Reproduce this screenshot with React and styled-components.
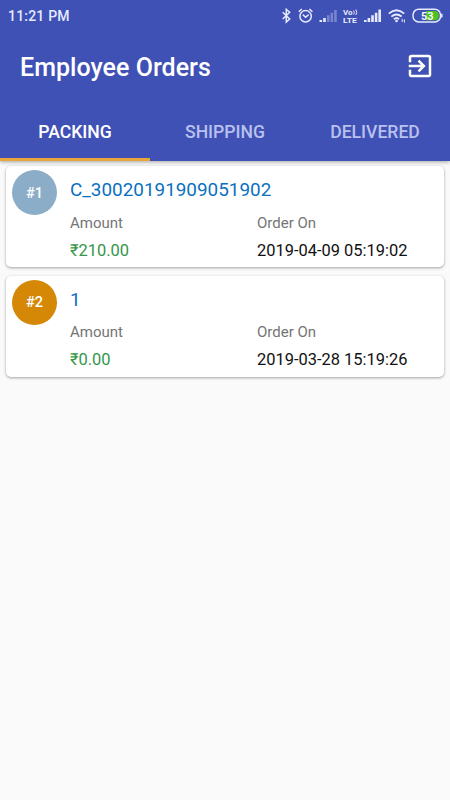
import React, { useState } from 'react';
import styled, { createGlobalStyle } from 'styled-components';

const GlobalStyle = createGlobalStyle`
  * {
    box-sizing: border-box;
  }

  body {
    margin: 0;
    background-color: #fafafa;
    font-family: Roboto, 'Noto Sans', sans-serif;
  }
`;

const Screen = styled.div`
  width: 450px;
  height: 800px;
  overflow: hidden;
  background-color: #fafafa;
`;

const Header = styled.header`
  position: relative;
  height: 161px;
  background-color: #3f51b5;
  box-shadow: 0 1px 4px rgba(0, 0, 0, 0.35);
`;

const StatusBar = styled.div`
  display: flex;
  justify-content: space-between;
  align-items: center;
  height: 32px;
  padding: 0 6px 0 8px;
  color: #e6eaff;
`;

const Clock = styled.span`
  font-size: 14px;
  font-weight: 500;
  letter-spacing: 0.2px;
`;

const StatusIcons = styled.svg`
  display: block;
  width: 164px;
  height: 32px;
`;

const Toolbar = styled.div`
  display: flex;
  justify-content: space-between;
  align-items: center;
  height: 70px;
  padding: 0 15px 0 20px;
`;

const Title = styled.h1`
  margin: 2px 0 0;
  font-size: 25px;
  line-height: 30px;
  font-weight: 500;
  letter-spacing: 0.03px;
  color: #fff;
`;

const LogoutButton = styled.button`
  display: flex;
  margin-bottom: 2px;
  padding: 0;
  border: none;
  background: none;
  color: #fff;
  cursor: pointer;
`;

const Tabs = styled.nav`
  display: grid;
  grid-template-columns: repeat(3, 1fr);
  height: 59px;
`;

const Tab = styled.button`
  padding: 4px 0 0;
  border: none;
  border-bottom: 3px solid ${({ $active }) => ($active ? '#e9a63a' : 'transparent')};
  background: none;
  font-family: inherit;
  font-size: 17.6px;
  font-weight: 500;
  color: ${({ $active }) => ($active ? '#fff' : '#b9c1ee')};
  cursor: pointer;
`;

const OrderList = styled.main`
  display: flex;
  flex-direction: column;
  gap: 8.5px;
  padding: 5px 6px;
`;

const Card = styled.article`
  display: flex;
  height: 101px;
  padding: 4px 6px;
  border-radius: 5px;
  background-color: #fff;
  box-shadow: 0 1px 3px rgba(0, 0, 0, 0.36);
`;

const Badge = styled.div`
  display: flex;
  flex-shrink: 0;
  justify-content: center;
  align-items: center;
  width: 45px;
  height: 45px;
  padding-top: 1px;
  border-radius: 50%;
  background-color: ${({ $color }) => $color};
  font-size: 14.5px;
  font-weight: 500;
  color: #fff;
`;

const Details = styled.div`
  flex: 1;
  padding: 8px 0 0 13px;
`;

const OrderCode = styled.div`
  font-size: 18.9px;
  line-height: 24px;
  color: #0b70bf;
`;

const Fields = styled.div`
  display: grid;
  grid-template-columns: 187px 1fr;
  margin-top: 10.7px;
`;

const Label = styled.div`
  font-size: 15px;
  line-height: 20px;
  color: #757575;
`;

const Value = styled.div`
  margin-top: 8px;
  font-size: 16.45px;
  line-height: 20px;
  color: ${({ $color }) => $color || '#111'};
`;

const tabs = ['PACKING', 'SHIPPING', 'DELIVERED'];

const orders = [
  { code: 'C_30020191909051902', amount: '₹210.00', date: '2019-04-09 05:19:02', color: '#8badc7' },
  { code: '1', amount: '₹0.00', date: '2019-03-28 15:19:26', color: '#d48806' },
];

const SystemIcons = () => (
  <StatusIcons viewBox="280 0 164 32" fill="none" stroke="#e6eaff" strokeWidth="1.5">
    {/* bluetooth */}
    <path d="M282.7 12.3l7 6.7-3.4 3V9.3l3.4 3-7 6.7" />
    {/* alarm */}
    <circle cx="305.6" cy="16.2" r="5.7" />
    <path d="M302.8 14.6l2.8 2.6 3-2.6M298.8 11.8l3-2.8M312.4 11.8l-3-2.8" />
    <g fill="#e6eaff" stroke="none">
      {/* first sim */}
      <path d="M319.5 20h2.6v2h-2.6zM323.2 18h2.6v4h-2.6z" />
      <path opacity="0.35" d="M327 15.3h2.5V22H327zM330.6 12.8h2.5V22h-2.5zM334.2 10h2.5v12h-2.5z" />
      <text x="343" y="15" fontSize="7" fontWeight="700" textLength="9.5" lengthAdjust="spacingAndGlyphs">Vo</text>
      <text x="343" y="22.5" fontSize="7.4" fontWeight="700" textLength="14" lengthAdjust="spacingAndGlyphs">LTE</text>
      {/* second sim */}
      <path d="M364 20h2.6v2H364zM367.6 18h2.6v4h-2.6zM371.2 15.3h2.6V22h-2.6zM374.8 12.8h2.6V22h-2.6zM378.4 9.5h2.6V22h-2.6z" />
    </g>
    <path d="M353.6 10.5q1.5 2 0 4M355.8 9.5q2 3 0 5.5" strokeWidth="1" />
    {/* wifi */}
    <path d="M388.8 13.6q7.7-6.6 15.4 0M391.4 16.6q5-4.4 10.2 0M394 19.3q2.5-2.4 5 0" strokeWidth="1.9" />
    <circle cx="396.5" cy="21" r="1.3" fill="#e6eaff" stroke="none" />
    <path d="M402.2 18.8v3.2M404.4 19.4v3.2" strokeWidth="1" />
    {/* battery */}
    <rect x="413" y="9.2" width="27.5" height="12.8" rx="5.8" />
    <path d="M426 10.9h8.5q4.4 0 4.4 4.7t-4.4 4.7h-8.5z" fill="#4fc21f" stroke="none" />
    <path d="M441.8 13.8v3.6" />
    <text x="427.2" y="19.5" textAnchor="middle" fontSize="11" fontWeight="700" fill="#f4f7ff" stroke="none">53</text>
  </StatusIcons>
);

const App = () => {
  const [activeTab, setActiveTab] = useState('PACKING');

  return (
    <Screen>
      <GlobalStyle />
      <Header>
        <StatusBar>
          <Clock>11:21 PM</Clock>
          <SystemIcons />
        </StatusBar>
        <Toolbar>
          <Title>Employee Orders</Title>
          <LogoutButton aria-label="Log out">
            <svg width="30" height="30" viewBox="0 0 24 24" fill="currentColor">
              <path d="M10.09 15.59L11.5 17l5-5-5-5-1.41 1.41L12.67 11H3v2h9.67l-2.58 2.59zM19 3H5c-1.11 0-2 .9-2 2v4h2V5h14v14H5v-4H3v4c0 1.1.89 2 2 2h14c1.1 0 2-.9 2-2V5c0-1.1-.9-2-2-2z" />
            </svg>
          </LogoutButton>
        </Toolbar>
        <Tabs>
          {tabs.map((tab) => (
            <Tab key={tab} $active={tab === activeTab} onClick={() => setActiveTab(tab)}>
              {tab}
            </Tab>
          ))}
        </Tabs>
      </Header>
      <OrderList>
        {orders.map((order, index) => (
          <Card key={order.code}>
            <Badge $color={order.color}>#{index + 1}</Badge>
            <Details>
              <OrderCode>{order.code}</OrderCode>
              <Fields>
                <div>
                  <Label>Amount</Label>
                  <Value $color="#35964a">{order.amount}</Value>
                </div>
                <div>
                  <Label>Order On</Label>
                  <Value>{order.date}</Value>
                </div>
              </Fields>
            </Details>
          </Card>
        ))}
      </OrderList>
    </Screen>
  );
};

export default App;
